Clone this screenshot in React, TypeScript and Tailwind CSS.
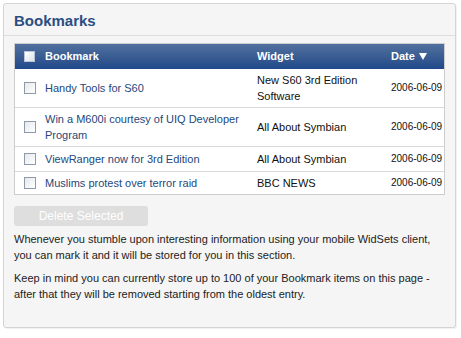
const rows = [
  { title: "Handy Tools for S60", widget: "New S60 3rd Edition Software", date: "2006-06-09" },
  { title: "Win a M600i courtesy of UIQ Developer Program", widget: "All About Symbian", date: "2006-06-09" },
  { title: "ViewRanger now for 3rd Edition", widget: "All About Symbian", date: "2006-06-09" },
  { title: "Muslims protest over terror raid", widget: "BBC NEWS", date: "2006-06-09" },
];

function Box({ header }: { header?: boolean }) {
  return (
    <span
      className={
        header
          ? "block size-[11px] border border-[#b8c4d8] bg-gradient-to-br from-white to-[#dde3ec]"
          : "block size-[12px] border border-[#8f9aa8] bg-gradient-to-br from-[#e6e9ee] to-white"
      }
    />
  );
}

export default function App() {
  return (
    <div className="h-[338px] w-[461px] bg-white p-[3px] pr-[5px] pb-[10px] font-['Liberation_Sans',sans-serif] text-[11px] text-[#222]">
      <div className="flex h-full flex-col rounded-[3px] border border-[#d4d4d4] bg-[#f5f5f5] shadow-[1px_1px_1px_rgba(0,0,0,0.06)]">
        <div className="border-b border-[#dedede] px-[10px] pt-[9px] pb-[6px]">
          <h1 className="text-[15px] leading-[16px] font-bold text-[#2b4e82]">Bookmarks</h1>
        </div>
        <div className="px-[10px] pt-[7px]">
          <div className="border border-[#cdcdcd] bg-white">
            <div className="flex h-[25px] items-center bg-gradient-to-b from-[#50709f] via-[#3a5d93] to-[#20488a] font-bold text-white">
              <div className="flex w-[26px] justify-center pl-[2px]">
                <Box header />
              </div>
              <div className="w-[212px] pl-[4px]">Bookmark</div>
              <div className="w-[134px] pl-[4px]">Widget</div>
              <div className="flex flex-1 items-center gap-[4px] pl-[4px]">
                Date
                <svg width="8" height="7" viewBox="0 0 8 7">
                  <path d="M0 0 H8 L4 7 Z" fill="#fff" />
                </svg>
              </div>
            </div>
            {rows.map((r, i) => (
              <div
                key={i}
                className={`flex items-center py-[3px] leading-[16px] ${i > 0 ? "border-t border-[#dadada]" : ""} ${i < 2 ? "min-h-[33px]" : i === 2 ? "min-h-[25px]" : "min-h-[23px]"}`}
              >
                <div className="flex w-[26px] justify-center pl-[3px]">
                  <Box />
                </div>
                <div className="w-[212px] pl-[4px] pr-[6px] text-[#26477a]">{r.title}</div>
                <div className="w-[134px] pl-[4px] pr-[8px] text-[#111]">{r.widget}</div>
                <div className="flex-1 whitespace-nowrap pl-[4px] text-[10px] text-[#111]">{r.date}</div>
              </div>
            ))}
          </div>
          <button className="mt-[11px] h-[20px] w-[134px] rounded-[3px] bg-[#dedede] text-[12px] text-white">
            Delete Selected
          </button>
          <p className="mt-[5px] leading-[16px]">
            Whenever you stumble upon interesting information using your mobile WidSets client, you can mark it and it will be stored for you in this section.
          </p>
          <p className="mt-[7px] leading-[16px]">
            Keep in mind you can currently store up to 100 of your Bookmark items on this page - after that they will be removed starting from the oldest entry.
          </p>
        </div>
      </div>
    </div>
  );
}
